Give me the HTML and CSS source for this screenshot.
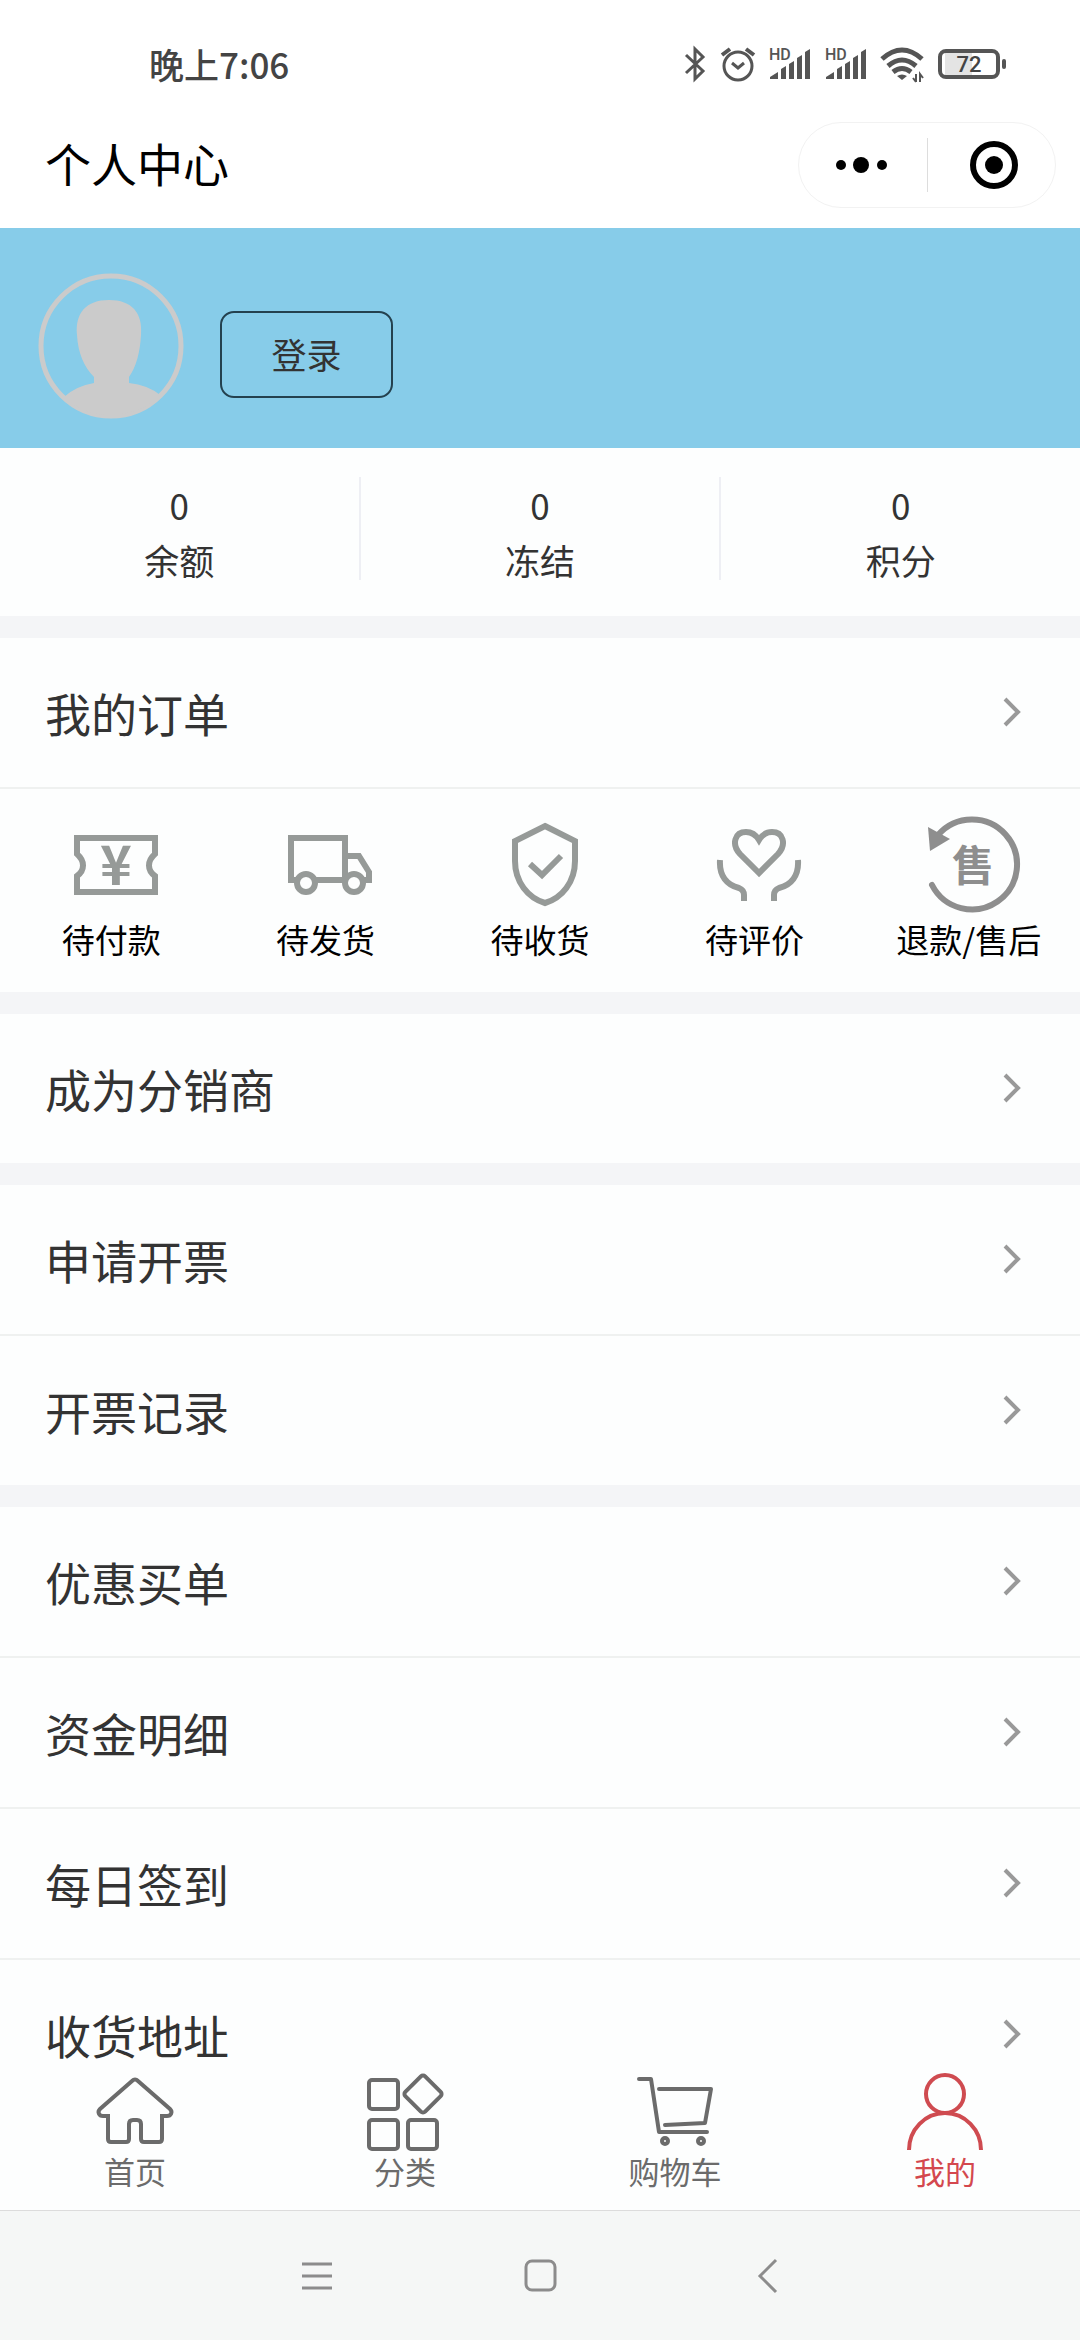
FILE: index.html
```html
<!DOCTYPE html>
<html lang="zh-CN">
<head>
    <meta charset="UTF-8">
    <meta name="viewport" content="width=device-width, initial-scale=1.0">
    <title>个人中心</title>
    <link rel="stylesheet" href="styles.css">
</head>
<body>

    <div class="status-bar">
        <span class="status-time">晚上7:06</span>
        <div class="status-icons">
            <svg width="24" height="36" viewBox="0 0 24 36" fill="none" stroke="#555" stroke-width="3">
                <path d="M3 9L20 25L12 33V3L20 11L3 27"/>
            </svg>
            <svg width="34" height="36" viewBox="0 0 34 36" fill="none" stroke="#555" stroke-width="3">
                <circle cx="17" cy="20" r="14"/>
                <path d="M11 17L17 22L23 17"/>
                <path d="M1 9L9 3M33 9L25 3" stroke-width="4"/>
            </svg>
            <svg width="42" height="36" viewBox="0 0 42 36" fill="#555">
                <text class="hd-text" x="0" y="14">HD</text>
                <path d="M1 33V31L9 26V33ZM12 33V23L17 20V33ZM20 33V18L25 15V33ZM28 33V12L33 9V33ZM36 33V6L41 3V33Z"/>
            </svg>
            <svg width="42" height="36" viewBox="0 0 42 36" fill="#555">
                <text class="hd-text" x="0" y="14">HD</text>
                <path d="M1 33V31L9 26V33ZM12 33V23L17 20V33ZM20 33V18L25 15V33ZM28 33V12L33 9V33ZM36 33V6L41 3V33Z"/>
            </svg>
            <svg width="42" height="36" viewBox="0 0 42 36" fill="none" stroke="#555" stroke-width="5">
                <path d="M1 13Q21 -5 41 13M7 20Q21 8 35 20M12 26Q21 19 30 26"/>
                <path d="M21 34L16 30Q21 27 26 30Z" fill="#555" stroke="none"/>
                <path d="M35 28V36M32 32L35 36M39 36V28L42 32" stroke-width="2"/>
            </svg>
            <svg width="70" height="36" viewBox="0 0 70 36">
                <rect x="8" y="7" width="27" height="22" fill="#e4e4e4"/>
                <rect x="3" y="5" width="58" height="26" rx="6" fill="none" stroke="#555" stroke-width="4"/>
                <rect x="65" y="13" width="4" height="10" rx="2" fill="#555"/>
                <text class="battery-text" x="32" y="26">72</text>
            </svg>
        </div>
    </div>

    <header class="nav-header">
        <h1>个人中心</h1>
        <div class="capsule">
            <button type="button" aria-label="更多">
                <svg width="60" height="50" viewBox="0 0 60 50">
                    <circle cx="8" cy="25" r="5"/>
                    <circle cx="28" cy="25" r="8"/>
                    <circle cx="49" cy="25" r="5"/>
                </svg>
            </button>
            <button type="button" aria-label="关闭">
                <svg width="60" height="50" viewBox="0 0 60 50">
                    <circle cx="33" cy="25" r="21" fill="none" stroke="#000" stroke-width="6"/>
                    <circle cx="33" cy="25" r="9"/>
                </svg>
            </button>
        </div>
    </header>

    <main class="content">
        <section class="profile">
            <svg class="avatar" viewBox="0 0 146 146" fill="#cbcbcb">
                <circle cx="73" cy="73" r="70" fill="none" stroke="#cbcbcb" stroke-width="5"/>
                <path d="M26 124Q38 113 56 110V104C46 94 40 80 39 62C37 40 48 27 71 27C94 27 105 40 103 62C102 80 98 94 91 104V110Q110 112 122 122A70 70 0 0 1 26 124Z"/>
            </svg>
            <button type="button" class="login-btn">登录</button>
        </section>

        <section class="stats">
            <div class="stat"><span>0</span><span>余额</span></div>
            <div class="stat"><span>0</span><span>冻结</span></div>
            <div class="stat"><span>0</span><span>积分</span></div>
        </section>

        <section class="group">
            <a class="row" href="#">我的订单<svg class="arrow" viewBox="0 0 20 30"><path d="M4 2L17 15L4 28"/></svg></a>
            <div class="orders">
                <a href="#">
                    <svg viewBox="0 0 110 100">
                        <path d="M21 23H99V39C91 46 91 55 99 61V77H21V61C29 55 29 46 21 39Z"/>
                        <text class="yen-text" x="60" y="70">¥</text>
                    </svg>
                    待付款
                </a>
                <a href="#">
                    <svg viewBox="0 0 110 100">
                        <path d="M26 65H20V23H74V65H44M74 65V41H88L98 57V65H92"/>
                        <circle cx="35" cy="68" r="9"/>
                        <circle cx="83" cy="68" r="9"/>
                    </svg>
                    待发货
                </a>
                <a href="#">
                    <svg viewBox="0 0 110 100">
                        <path d="M60 11L90 26V46C90 67 77 83 60 88C43 83 30 67 30 46V26Z"/>
                        <path d="M45 49L57 60L76 41"/>
                    </svg>
                    待收货
                </a>
                <a href="#">
                    <svg viewBox="0 0 110 100">
                        <path d="M60 58L41 39C32 29 36 17 47 17C53 17 57 20 60 25C63 20 67 17 73 17C84 17 88 29 79 39Z"/>
                        <path d="M21 45C20 61 28 70 40 73Q45 75 45 80V86M99 45C100 61 92 70 80 73Q75 75 75 80V86"/>
                    </svg>
                    待评价
                </a>
                <a href="#">
                    <svg class="refund" viewBox="0 0 110 100">
                        <path d="M18 70A45 45 0 1 0 24 20" stroke-linecap="round"/>
                        <path class="solid" d="M14 12L36 24L16 36Z"/>
                        <text class="sale-text" x="59" y="66">售</text>
                    </svg>
                    退款/售后
                </a>
            </div>
        </section>

        <section class="group">
            <a class="row" href="#">成为分销商<svg class="arrow" viewBox="0 0 20 30"><path d="M4 2L17 15L4 28"/></svg></a>
        </section>

        <section class="group">
            <a class="row" href="#">申请开票<svg class="arrow" viewBox="0 0 20 30"><path d="M4 2L17 15L4 28"/></svg></a>
            <a class="row" href="#">开票记录<svg class="arrow" viewBox="0 0 20 30"><path d="M4 2L17 15L4 28"/></svg></a>
        </section>

        <section class="group">
            <a class="row" href="#">优惠买单<svg class="arrow" viewBox="0 0 20 30"><path d="M4 2L17 15L4 28"/></svg></a>
            <a class="row" href="#">资金明细<svg class="arrow" viewBox="0 0 20 30"><path d="M4 2L17 15L4 28"/></svg></a>
            <a class="row" href="#">每日签到<svg class="arrow" viewBox="0 0 20 30"><path d="M4 2L17 15L4 28"/></svg></a>
            <a class="row" href="#">收货地址<svg class="arrow" viewBox="0 0 20 30"><path d="M4 2L17 15L4 28"/></svg></a>
        </section>
    </main>

    <nav class="tab-bar">
        <a href="#">
            <svg viewBox="0 0 80 80">
                <path d="M37 9Q40 6 43 9L75 37C78 40 76 44 72 44H67V67Q67 70 64 70H49Q46 70 46 67V52Q46 48 42 48H38Q34 48 34 52V67Q34 70 31 70H16Q13 70 13 67V44H8C4 44 2 40 5 37Z"/>
            </svg>
            首页
        </a>
        <a href="#">
            <svg viewBox="0 0 80 80">
                <rect x="4" y="8" width="29" height="29" rx="3"/>
                <rect x="4" y="48" width="29" height="29" rx="3"/>
                <rect x="43" y="48" width="29" height="29" rx="3"/>
                <rect x="44" y="8" width="28" height="28" rx="3" transform="rotate(45 58 22)"/>
            </svg>
            分类
        </a>
        <a href="#">
            <svg viewBox="0 0 80 80" stroke-linecap="round" stroke-linejoin="round">
                <path d="M4 7H16L24 60H72M24 17H76L70 51L30 53"/>
                <circle cx="30" cy="69" r="3"/>
                <circle cx="66" cy="69" r="3"/>
            </svg>
            购物车
        </a>
        <a href="#" class="active">
            <svg viewBox="0 0 80 80">
                <circle cx="40" cy="22" r="19"/>
                <path d="M4 78A36 37 0 0 1 76 78"/>
            </svg>
            我的
        </a>
    </nav>

    <div class="system-nav">
        <button type="button" aria-label="菜单">
            <svg viewBox="0 0 40 40"><path d="M5 8H35M5 20H35M5 32H35"/></svg>
        </button>
        <button type="button" aria-label="主页">
            <svg viewBox="0 0 40 40"><rect x="6" y="5" width="29" height="29" rx="6"/></svg>
        </button>
        <button type="button" aria-label="返回">
            <svg viewBox="0 0 40 40"><path d="M33 4L17 20L33 36"/></svg>
        </button>
    </div>

</body>
</html>
```
FILE: styles.css
```css
* {
    margin: 0;
    padding: 0;
    box-sizing: border-box;
}

body {
    height: 100vh;
    display: flex;
    flex-direction: column;
    background-color: #fff;
    color: #333;
    font-family: "Noto Sans CJK SC", sans-serif;
    overflow: hidden;
}

a {
    color: inherit;
    text-decoration: none;
}

button {
    font-family: inherit;
    color: inherit;
    background: none;
    border: none;
    cursor: pointer;
}

svg {
    display: block;
    flex-shrink: 0;
    overflow: visible;
}

/* 状态栏 */
.status-bar {
    flex-shrink: 0;
    height: 102px;
    padding: 26px 73px 0 149px;
    display: flex;
    justify-content: space-between;
    align-items: center;
}

.status-time {
    padding-bottom: 2px;
    font-size: 35px;
    font-weight: 500;
    color: #444;
}

.status-icons {
    display: flex;
    align-items: center;
    gap: 14px;
}

.hd-text {
    font-family: Roboto, sans-serif;
    font-size: 16px;
    font-weight: 500;
}

.battery-text {
    font-family: Roboto, sans-serif;
    font-size: 22px;
    font-weight: 500;
    fill: #444;
    text-anchor: middle;
}

/* 标题栏 */
.nav-header {
    flex-shrink: 0;
    height: 126px;
    padding: 0 24px 0 45px;
    display: flex;
    justify-content: space-between;
    align-items: center;
}

.nav-header h1 {
    padding-bottom: 6px;
    font-size: 46px;
    font-weight: 400;
    color: #000;
}

.capsule {
    width: 258px;
    height: 86px;
    display: flex;
    align-items: center;
    border: 1px solid #f2f2f2;
    border-radius: 43px;
}

.capsule button {
    flex: 1;
    height: 54px;
    display: flex;
    justify-content: center;
    align-items: center;
}

.capsule button + button {
    border-left: 1px solid #ddd;
}

.content {
    flex: 1;
    min-height: 0;
    overflow-y: auto;
    scrollbar-width: none;
    background-color: #f4f5f7;
}

/* 用户信息 */
.profile {
    height: 220px;
    padding: 45px 38px 0;
    display: flex;
    align-items: flex-start;
    gap: 36px;
    background-color: #87cce9;
}

.avatar {
    width: 146px;
    height: 146px;
}

.login-btn {
    width: 173px;
    height: 87px;
    margin-top: 38px;
    padding-bottom: 3px;
    border: 2px solid #24414f;
    border-radius: 14px;
    font-size: 35px;
}

.stats {
    height: 168px;
    padding: 29px 0 36px;
    display: flex;
    background-color: #fdfefe;
}

.stat {
    flex: 1;
    display: flex;
    flex-direction: column;
    align-items: center;
    font-size: 35px;
    line-height: 55px;
}

.stat + .stat {
    border-left: 2px solid #eeeff4;
}

.group {
    background-color: #fdfefe;
}

.group + .group,
.stats + .group {
    margin-top: 22px;
}

.row {
    height: 149px;
    padding: 0 59px 2px 45px;
    display: flex;
    justify-content: space-between;
    align-items: center;
    font-size: 46px;
    line-height: 48px;
}

.row + .row {
    height: 151px;
}

.row + .row,
.row + .orders {
    border-top: 2px solid #eff1f0;
}

.arrow {
    width: 20px;
    height: 30px;
    fill: none;
    stroke: #999;
    stroke-width: 4;
}

/* 订单入口 */
.orders {
    padding: 26px 4px 30px;
    display: flex;
}

.orders a {
    flex: 1;
    display: flex;
    flex-direction: column;
    align-items: center;
    gap: 2px;
    font-size: 33px;
    line-height: 45px;
    color: #000;
}

.orders svg {
    width: 110px;
    height: 100px;
    fill: none;
    stroke: #969a98;
    stroke-width: 6;
}

.orders .refund {
    stroke: #8e8e8e;
}

.orders .solid {
    fill: #8e8e8e;
    stroke: none;
}

.yen-text,
.sale-text {
    font-weight: 700;
    text-anchor: middle;
    stroke: none;
}

.yen-text {
    font-size: 54px;
    fill: #969a98;
}

.sale-text {
    font-size: 42px;
    fill: #8e8e8e;
}

/* 底部导航 */
.tab-bar {
    flex-shrink: 0;
    padding: 9px 0 20px;
    display: flex;
    background-color: #fdfefe;
    border-bottom: 1px solid #dcdcdc;
}

.tab-bar a {
    flex: 1;
    display: flex;
    flex-direction: column;
    align-items: center;
    font-size: 31px;
    line-height: 38px;
    color: #6b6b6b;
}

.tab-bar svg {
    width: 80px;
    height: 80px;
    fill: none;
    stroke: #6b6b6b;
    stroke-width: 4;
}

.tab-bar .active {
    color: #d4484e;
}

.tab-bar .active svg {
    stroke: #cf4b50;
}

.system-nav {
    flex-shrink: 0;
    height: 129px;
    padding: 0 19%;
    display: flex;
    background-color: #f5f7f6;
}

.system-nav button {
    flex: 1;
    display: flex;
    justify-content: center;
    align-items: center;
}

.system-nav svg {
    width: 40px;
    height: 40px;
    fill: none;
    stroke: #8c8c8c;
    stroke-width: 3;
}
```
